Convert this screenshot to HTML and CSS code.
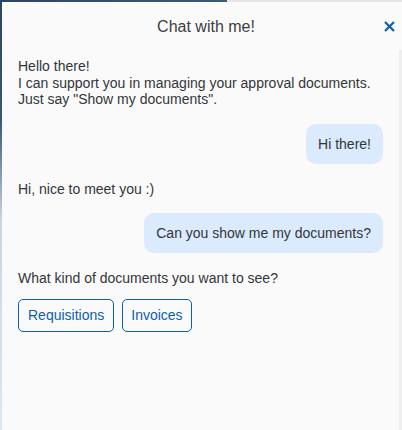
FILE: index.html
```html
<!DOCTYPE html>
<html>
<head>
<meta charset="utf-8">
<link rel="stylesheet" href="styles.css">
</head>
<body>
<div class="panel">
  <div class="header">
    <div class="title">Chat with me!</div>
    <button class="close" aria-label="Close">
      <svg width="11" height="11" viewBox="0 0 11 11"><path d="M1 1 L10 10 M10 1 L1 10" stroke="#0a5fb0" stroke-width="2.2" stroke-linecap="butt"/></svg>
    </button>
  </div>
  <div class="body">
    <div class="scroll">
      <div class="bot">Hello there!<br>I can support you in managing your approval documents.<br>Just say "Show my documents".</div>
      <div class="user"><span class="bubble">Hi there!</span></div>
      <div class="bot">Hi, nice to meet you :)</div>
      <div class="user"><span class="bubble">Can you show me my documents?</span></div>
      <div class="bot">What kind of documents you want to see?</div>
      <div class="actions">
        <button class="btn btn-wide">Requisitions</button>
        <button class="btn">Invoices</button>
      </div>
    </div>
    <div class="track"></div>
  </div>
</div>
</body>
</html>
```
FILE: styles.css
```css
html, body {
  margin: 0;
  height: 100%;
}
body {
  background:
    linear-gradient(to right, #2e4560 0, #3c5a7a 227px, #e6e6e6 227px) top left / 100% 2px no-repeat,
    linear-gradient(to bottom, #2e4560 0, #3a5676 120px, #c9d6e4 220px, #dfe7f0 430px);
  overflow: hidden;
  font-family: "Liberation Sans", Arial, sans-serif;
  color: #32363a;
}
.panel {
  margin: 2px 0 0 2px;
  height: 428px;
  background: #fafafa;
  display: flex;
  flex-direction: column;
}
.header {
  height: 48px;
  flex: none;
  display: flex;
  align-items: center;
  justify-content: center;
  padding-left: 8px;
  position: relative;
}
.title {
  font-size: 16px;
  color: #3a3e42;
  margin-top: 1px;
}
.close {
  position: absolute;
  right: 7px;
  top: 19px;
  width: 11px;
  height: 11px;
  padding: 0;
  border: 0;
  background: none;
  display: flex;
}
.body {
  flex: 1;
  display: flex;
  min-height: 0;
}
.scroll {
  flex: 1;
  padding: 8px 16px 0 16px;
  display: flex;
  flex-direction: column;
  font-size: 14px;
  line-height: 16.5px;
}
.track {
  width: 3px;
  background: #efefef;
  flex: none;
}
.bot {
  margin-bottom: 16px;
}
.user {
  display: flex;
  justify-content: flex-end;
  margin-bottom: 17px;
}
.bubble {
  background: #dbeafc;
  border-radius: 10px;
  padding: 12px 12px;
  line-height: 16px;
}
.actions {
  display: flex;
  gap: 8px;
  margin-top: -4px;
}
.btn {
  font-family: inherit;
  font-size: 14px;
  color: #0a5fb0;
  background: transparent;
  border: 1px solid #0a5fb0;
  border-radius: 5px;
  height: 33px;
  padding: 0 8px;
}
.btn-wide {
  padding: 0 9px;
}
```
